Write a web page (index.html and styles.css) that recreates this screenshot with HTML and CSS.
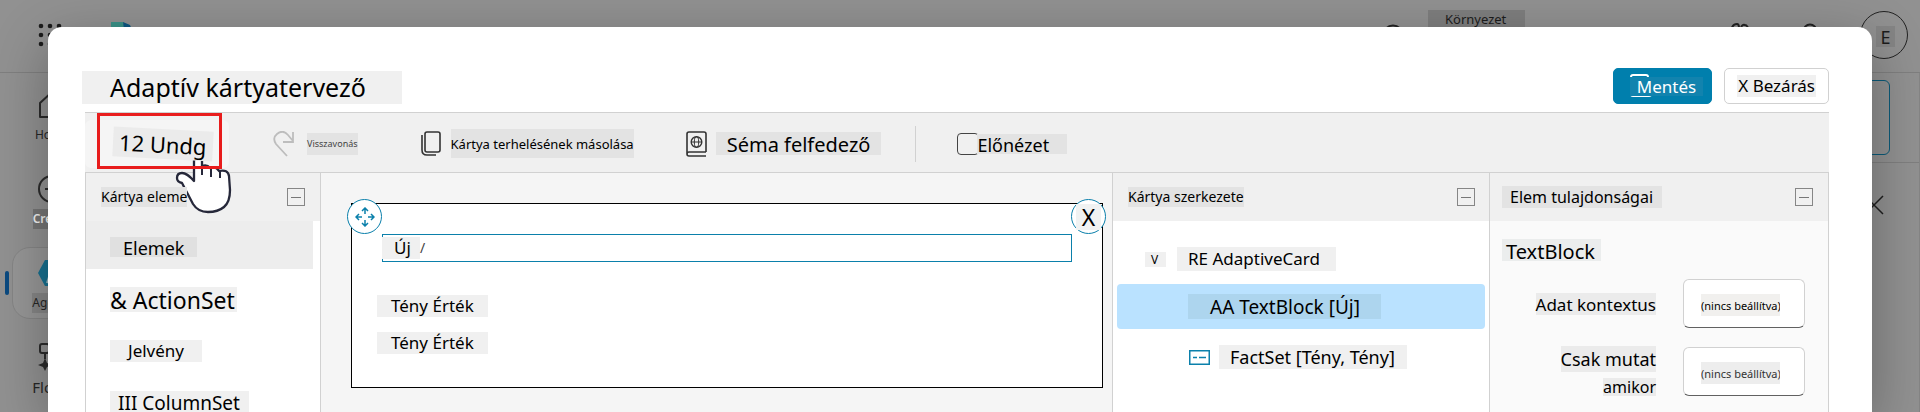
FILE: index.html
```html
<!DOCTYPE html>
<html lang="hu">
<head>
<meta charset="utf-8">
<title>Adaptív kártyatervező</title>
<link rel="stylesheet" href="styles.css">
</head>
<body>
<div class="app">
  <header class="app-header">
    <svg class="waffle" width="24" height="24" viewBox="0 0 24 24"><g fill="#1c1c1c"><circle cx="3" cy="3" r="2.3"/><circle cx="12" cy="3" r="2.3"/><circle cx="21" cy="3" r="2.3"/><circle cx="3" cy="12" r="2.3"/><circle cx="12" cy="12" r="2.3"/><circle cx="21" cy="12" r="2.3"/><circle cx="3" cy="21" r="2.3"/><circle cx="12" cy="21" r="2.3"/><circle cx="21" cy="21" r="2.3"/></g></svg>
    <svg class="brand" width="26" height="26" viewBox="0 0 26 26"><path d="M1 0h12l4 12H1z" fill="#3a9187"/><path d="M13 0l7 3 5 12H15z" fill="#0c5680"/></svg>
    <div class="environment">
      <svg width="22" height="22" viewBox="0 0 22 22"><circle cx="11" cy="11" r="9.5" fill="none" stroke="#222" stroke-width="2"/></svg>
      <span class="environment-name">Környezet</span>
    </div>
    <svg class="copilot-icon" width="24" height="24" viewBox="0 0 24 24"><path d="M2 14C3 4 5 1 9 1q2 0 2 4M13 5q1-4 4-3 3 0 5 9" fill="none" stroke="#222" stroke-width="2"/></svg>
    <svg class="help-icon" width="24" height="24" viewBox="0 0 24 24"><circle cx="12" cy="8" r="6.5" fill="none" stroke="#222" stroke-width="2"/></svg>
    <span class="avatar"><span class="avatar-letter">E</span></span>
  </header>
  <div class="app-body">
    <nav class="rail">
      <a class="rail-item" href="#home"><svg width="28" height="28" viewBox="0 0 28 28"><path d="M2 26V12L14 1l12 11v14h-9v-9h-6v9z" fill="none" stroke="#2b2b2b" stroke-width="2" stroke-linejoin="round"/></svg><span>Home</span></a>
      <a class="rail-item rail-create" href="#create"><svg width="28" height="28" viewBox="0 0 28 28"><circle cx="14" cy="14" r="13" fill="none" stroke="#2b2b2b" stroke-width="2"/><path d="M7 14h14M14 7v14" stroke="#2b2b2b" stroke-width="2"/></svg><span>Create</span></a>
      <a class="rail-item rail-current" href="#agents"><svg width="28" height="28" viewBox="0 0 28 28"><path d="M7 1h14l7 13-7 13H7L0 14z" fill="#17708f"/><path d="M9 24l5-15" stroke="#9fb6bd" stroke-width="2"/></svg><span>Agents</span></a>
      <a class="rail-item rail-flows" href="#flows"><svg width="28" height="28" viewBox="0 0 28 28"><rect x="2" y="1" width="9" height="9" rx="2" fill="none" stroke="#2b2b2b" stroke-width="2"/><path d="M7 10v6M11 6h10v8" fill="none" stroke="#2b2b2b" stroke-width="2"/><path d="M7 15l2 5 5 2-5 2-2 4-2-4-5-2 5-2z" fill="#2b2b2b"/></svg><span>Flows</span></a>
    </nav>
    <main class="app-main">
      <div class="app-banner"><div class="app-box"></div></div>
      <svg class="app-close" width="20" height="20" viewBox="0 0 20 20"><path d="M1 1l18 18M19 1L1 19" stroke="#1f1f1f" stroke-width="1.5"/></svg>
    </main>
  </div>
</div>

<section class="dialog" role="dialog" aria-labelledby="dialog-title">
  <header class="titlebar">
    <h1 class="title" id="dialog-title">Adaptív kártyatervező</h1>
    <div class="actions">
      <button class="button button-primary" type="button"><svg class="save-icon" width="22" height="24" viewBox="0 0 22 24"><path d="M1 3q0-2 2-2h13q2 0 2 2M1 20q0 2 2 2h16q2 0 2-2" fill="none" stroke="#fff" stroke-width="2"/></svg><span class="primary-text">Mentés</span></button>
      <button class="button" type="button"><span class="button-text">X Bezárás</span></button>
    </div>
  </header>
  <div class="designer">
    <div class="toolbar">
      <div class="undo">
        <button class="undo-button" type="button">12 Undg</button>
        <svg class="pointer" width="60" height="62" viewBox="0 0 60 62"><path d="M20 4q4-4 8 0v6q5-2 8 2 6-2 9 3 9-2 10 5l1 14q0 12-6 17-6 5-16 5t-15-8L8 27q-5-1-5-5 0-5 5-5 5 0 12 8z" fill="#fff" stroke="#26283a" stroke-width="2.300" stroke-linejoin="round"/><path d="M28 8v11M37 11v10M46 14v8" stroke="#26283a" stroke-width="2"/></svg>
        <span class="highlight"></span>
      </div>
      <button class="tool tool-redo" type="button" disabled><svg width="22" height="26" viewBox="0 0 22 26"><path d="M14 25L3 13Q-1 7 4 3q6-5 11 1l5 6M20 1v10H10" fill="none" stroke="#bdbdbd" stroke-width="1.8"/></svg><span class="tool-text">Visszavonás</span></button>
      <button class="tool tool-copy" type="button"><svg width="20" height="26" viewBox="0 0 20 26"><rect x="4" y="1" width="15" height="20" rx="2" fill="none" stroke="#333" stroke-width="1.6"/><path d="M1 4v15q0 5 5 5h9" fill="none" stroke="#333" stroke-width="1.6"/></svg><span class="tool-text">Kártya terhelésének másolása</span></button>
      <button class="tool tool-schema" type="button"><svg width="21" height="26" viewBox="0 0 21 26"><path d="M20 21H3q-2 0-2 2t2 2h17M1 23V3q0-2 2-2h15q2 0 2 2v18" fill="none" stroke="#333" stroke-width="1.6"/><circle cx="10.500" cy="11" r="5.300" fill="none" stroke="#333" stroke-width="1.4"/><ellipse cx="10.500" cy="11" rx="2.200" ry="5.300" fill="none" stroke="#333"/><path d="M5 11h11" stroke="#333"/></svg><span class="tool-text">Séma felfedező</span></button>
      <span class="divider"></span>
      <label class="preview"><input class="preview-check" type="checkbox"><span class="tool-text">Előnézet</span></label>
    </div>
    <div class="panels">
      <section class="panel panel-palette">
        <header class="panel-head"><h2 class="panel-title">Kártya eleme</h2><button class="collapse" type="button" aria-label="Összecsukás"></button></header>
        <ul class="palette">
          <li class="palette-row palette-group"><span class="tag">Elemek</span></li>
          <li class="palette-row palette-action"><span class="tag">&amp; ActionSet</span></li>
          <li class="palette-row palette-badge"><span class="tag">Jelvény</span></li>
          <li class="palette-row palette-column"><span class="tag">III ColumnSet</span></li>
        </ul>
      </section>
      <section class="canvas">
        <div class="card">
          <button class="handle handle-move" type="button" aria-label="Mozgatás"><svg width="20" height="20" viewBox="0 0 20 20"><path d="M10 7V1M7 4l3-3 3 3M10 13v6M7 16l3 3 3-3M7 10H1M4 7l-3 3 3 3M13 10h6M16 7l3 3-3 3" fill="none" stroke="#0b80ab" stroke-width="1.5"/></svg></button>
          <button class="handle handle-remove" type="button"><span class="remove-text">X</span></button>
          <div class="text-block"><span class="text-value">Új</span><span class="caret">/</span></div>
          <div class="facts"><span class="tag fact">Tény Érték</span><span class="tag fact">Tény Érték</span></div>
        </div>
      </section>
      <section class="panel panel-structure">
        <header class="panel-head"><h2 class="panel-title">Kártya szerkezete</h2><button class="collapse" type="button" aria-label="Összecsukás"></button></header>
        <ul class="tree">
          <li class="tree-row tree-root"><span class="tag twisty">V</span><span class="tag">RE AdaptiveCard</span></li>
          <li class="tree-row tree-selected"><span class="tag">AA TextBlock [Új]</span></li>
          <li class="tree-row tree-facts"><svg width="21" height="15" viewBox="0 0 21 15"><rect x="0.750" y="0.750" width="19.500" height="13.500" fill="#fff" stroke="#0b80ab" stroke-width="1.5"/><path d="M4 7.500h4M10 7.500h7" stroke="#0b80ab" stroke-width="1.5"/></svg><span class="tag">FactSet [Tény, Tény]</span></li>
        </ul>
      </section>
      <section class="panel panel-properties">
        <header class="panel-head"><h2 class="panel-title">Elem tulajdonságai</h2><button class="collapse" type="button" aria-label="Összecsukás"></button></header>
        <div class="properties">
          <h3 class="tag element-name">TextBlock</h3>
          <div class="field"><label class="field-label" for="context"><span class="tag label-single">Adat kontextus</span></label><span class="field-box"><input class="field-input" id="context" type="text" value="(nincs beállítva)"></span></div>
          <div class="field"><label class="field-label" for="when"><span class="tag label-first">Csak mutat</span><span class="tag label-second">amikor</span></label><span class="field-box"><input class="field-input field-muted" id="when" type="text" value="(nincs beállítva)"></span></div>
        </div>
      </section>
    </div>
  </div>
</section>
</body>
</html>
```

FILE: styles.css
```css
* { box-sizing: border-box; }
html, body { height: 100%; }
body {
  margin: 0;
  overflow: hidden;
  background: #919191;
  color: #000;
  font-family: "Noto Sans", sans-serif;
  font-size: 17px;
}
h1, h2, h3, ul { margin: 0; padding: 0; font-weight: 400; }
ul { list-style: none; }
button, input { font: inherit; color: inherit; }
button { padding: 0; border: 0; background: none; }
svg { display: block; flex: none; }

/* Page behind the dialog */
.app { display: flex; flex-direction: column; height: 100%; }
.app-header {
  display: flex;
  align-items: center;
  height: 73px;
  padding: 0 12px 2px 38px;
  border-bottom: 1px solid #7f7f7f;
}
.brand { margin-left: 48px; }
.environment { display: flex; align-items: center; gap: 24px; height: 20px; margin: 0 203px 0 auto; }
.environment-name {
  align-self: flex-end;
  width: 97px;
  height: 18px;
  margin-bottom: 17px;
  padding-left: 17px;
  background: #7e7e7e;
  color: #1c1c1c;
  font-size: 13px;
  line-height: 18px;
}
.help-icon { margin: 0 38px 0 46px; }
.avatar {
  display: flex;
  align-items: center;
  justify-content: center;
  width: 48px;
  height: 48px;
  padding: 3px 3px 0 0;
  border: 1px solid #222;
  border-radius: 50%;
}
.avatar-letter { padding: 1px 4px 0; background: #858585; font-size: 18px; line-height: 20px; color: #1c1c1c; }
.avatar { padding: 3px 0 0 3px; }
.app-body { display: flex; flex: 1; min-height: 0; }
.rail { display: flex; flex-direction: column; gap: 12px; width: 102px; padding: 6px 0 0 12px; }
.rail-item {
  display: flex;
  flex: none;
  flex-direction: column;
  align-items: center;
  gap: 6px;
  height: 72px;
  padding: 12px 10px 0 0;
  color: #262626;
  font-size: 12px;
  line-height: 20px;
  text-decoration: none;
}
.rail-create span { background: #757575; color: #f2f2f2; font-weight: 600; }
.rail-current {
  position: relative;
  padding-top: 11px;
  border: 1px solid #858585;
  border-radius: 18px;
  background: #969696;
}
.rail-current span { background: #858585; }
.rail-current::before {
  content: "";
  position: absolute;
  left: -8px;
  top: 23px;
  width: 4px;
  height: 24px;
  border-radius: 2px;
  background: #0b4a80;
}
.rail-flows { font-size: 15px; }
.app-main { flex: 1; border-right: 1px solid #858585; }
.app-banner { height: 90px; padding: 7px 29px 7px 0; border-bottom: 1px solid #7f7f7f; }
.app-box { height: 75px; border: 1px solid #0b5a78; border-radius: 6px; }
.app-close { margin: 32px 35px 0 auto; }

/* Dialog */
.dialog {
  position: absolute;
  inset: 27px 48px 0;
  display: flex;
  flex-direction: column;
  border-radius: 14px 14px 0 0;
  background: #fff;
  box-shadow: 0 16px 56px rgba(0, 0, 0, 0.3);
}
.titlebar { display: flex; align-items: flex-end; justify-content: space-between; padding: 41px 43px 8px 34px; }
.title { padding: 0 36px 0 28px; background: #f0f0f0; font-size: 25px; line-height: 33px; }
.actions { display: flex; gap: 12px; }
.button { display: flex; align-items: center; justify-content: center; height: 36px; padding: 0 12px; border: 1px solid #d1d1d1; border-radius: 5px; background: #fff; }
.button-primary { position: relative; padding: 0 8px 0 16px; border-color: #007fad; background: #007fad; color: #fff; }
.button-text { padding: 0 1px; background: #f0f0f0; line-height: 22px; }
.save-icon { position: absolute; left: 16px; top: 5px; }
.primary-text { position: relative; padding: 0 7px; background: #1283ae; line-height: 19px; }
.designer { display: flex; flex: 1; flex-direction: column; min-height: 0; margin: 0 43px 0 37px; }

.toolbar { display: flex; align-items: center; height: 61px; padding-top: 2px; border: solid #d1d1d1; border-width: 1px 0; background: #f0f0f0; }
.tool { display: flex; align-items: center; }
.tool-text { background: #e3e3e3; }
.undo { position: relative; display: flex; align-items: center; width: 144px; height: 48px; padding-left: 28px; border-radius: 6px; background: #f5f5f5; }
.undo-button { position: relative; z-index: 2; padding: 0 6px; background: #ebebeb; font-size: 22px; line-height: 30px; transform: rotate(3deg); }
.pointer { position: absolute; z-index: 1; left: 89px; top: 36px; }
.highlight { position: absolute; z-index: 3; left: 12px; top: -7px; width: 125px; height: 56px; border: 3px solid #e81c1c; }
.tool-redo { gap: 12px; margin-left: 44px; color: #444; font-size: 9px; line-height: 22px; }
.tool-copy { gap: 10px; margin-left: 63px; font-size: 13px; line-height: 28px; }
.tool-copy .tool-text { padding-top: 1px; }
.tool-schema { gap: 9px; margin-left: 52px; font-size: 20px; line-height: 20px; }
.tool-schema .tool-text { padding: 3px 11px 0; }
.divider { width: 1px; height: 36px; margin: 0 41px 0 34px; background: #d1d1d1; }
.preview { display: flex; align-items: center; font-size: 18px; line-height: 18px; }
.preview-check { appearance: none; width: 22px; height: 22px; margin: 0 -2px 0 0; border: 1px solid #444; border-radius: 4px; }
.preview .tool-text { position: relative; padding: 2px 18px 0 0; }

.panels { display: grid; flex: 1; grid-template-columns: 236px 1fr 377px 340px; min-height: 0; }
.panel { min-width: 0; border-left: 1px solid #d1d1d1; background: #fff; }
.panel-palette, .panel-properties { border-right: 1px solid #d1d1d1; }
.panel-head { display: flex; align-items: center; justify-content: space-between; height: 48px; padding: 0 15px; background: #f0f0f0; }
.panel-title { position: relative; z-index: 2; background: #e3e3e3; font-size: 14px; line-height: 20px; }
.collapse { display: flex; align-items: center; justify-content: center; width: 18px; height: 18px; border: 1px solid #868686; }
.collapse::before { content: ""; width: 10px; height: 1px; background: #777; }
.tag { background: #f0f0f0; white-space: nowrap; }

.palette { display: flex; flex-direction: column; gap: 4px; overflow: hidden; padding-right: 7px; }
.palette-row { display: flex; flex: none; align-items: center; height: 48px; padding: 4px 0 0 24px; }
.palette-group { background: #ededed; font-size: 18px; line-height: 18px; }
.palette-group .tag { padding: 2px 13px 0; background: #e0e0e0; }
.palette-action { font-size: 23px; line-height: 23px; }
.palette-action .tag { padding: 2px 2px 0 0; }
.palette-badge { line-height: 22px; }
.palette-badge .tag { padding: 0 18px; }
.palette-column { font-size: 19px; line-height: 24px; }
.palette-column .tag { padding: 0 9px 0 8px; }

.canvas { padding: 30px 9px 0 30px; background: #f5f5f5; }
.card { position: relative; height: 185px; padding: 30px 30px 0 25px; border: 1px solid #000; background: #fff; }
.handle { position: absolute; top: -5px; display: flex; align-items: center; justify-content: center; width: 35px; height: 35px; border: 1px solid #0b80ab; border-radius: 50%; background: #fff; }
.handle-move { left: -5px; }
.handle-remove { right: -4px; font-size: 23px; line-height: 26px; }
.remove-text { padding: 0 6px; background: #f0f2f2; }
.text-block { display: flex; align-items: center; height: 28px; margin-left: 5px; border: 1px solid #0b80ab; line-height: 22px; }
.text-value { width: 38px; margin-left: -1px; padding-left: 12px; background: #f0f0f0; }
.caret { color: #444; font-size: 14px; }
.facts { display: flex; flex-direction: column; align-items: flex-start; gap: 15px; margin-top: 33px; }
.fact { padding: 0 14px 0 14px; line-height: 22px; }

.panel-structure .panel-head { padding-right: 14px; }
.tree { padding: 13px 4px 0; }
.tree-row { display: flex; align-items: center; line-height: 24px; }
.tree-root { height: 50px; padding-left: 28px; gap: 11px; }
.tree-root .tag:last-child { padding: 0 16px 0 11px; }
.tree-root .twisty { width: 21px; padding-left: 6px; font-size: 12px; line-height: 15px; }
.tree-selected { height: 45px; padding-left: 71px; border-radius: 4px; background: #bae2ff; font-size: 19px; }
.tree-selected .tag { padding: 1px 21px 0 22px; background: #add5ee; }
.tree-facts { height: 56px; padding-left: 72px; gap: 9px; font-size: 18px; }
.tree-facts .tag { padding: 0 12px 0 11px; }

.panel-properties { background: #fafafa; }
.panel-properties .panel-head { padding-left: 12px; }
.panel-properties .panel-title { padding: 1px 9px 0 8px; font-size: 16px; line-height: 21px; }
.properties { display: flex; flex-direction: column; align-items: stretch; gap: 18px; padding: 18px 23px 0 12px; }
.element-name { align-self: flex-start; padding: 4px 6px 0 4px; background: #ebeded; font-size: 20px; line-height: 18px; }
.field { display: flex; align-items: center; gap: 27px; }
.field-label { display: flex; flex: 1; flex-direction: column; align-items: flex-end; gap: 6px; }
.field-label .tag { background: #ebebeb; }
.label-single { padding-top: 2px; line-height: 20px; }
.label-first { font-size: 18px; line-height: 26px; }
.label-second { font-size: 16px; line-height: 18px; }
.field-box { display: flex; align-items: center; height: 49px; padding: 3px 24px 0 17px; border: 1px solid #d1d1d1; border-bottom-color: #616161; border-radius: 6px; background: #fff; }
.field-input { width: 79px; height: 22px; padding: 1px 0 0; border: 0; background: #f1f0ee; font-size: 11px; }
.field-muted { background: #ededed; color: #333; }
```
